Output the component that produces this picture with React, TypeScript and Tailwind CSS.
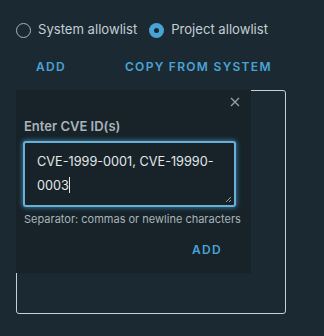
import React from "react";

export default function App() {
  return (
    <div
      className="w-[324px] h-[336px] bg-[#1b2a32] overflow-hidden"
      style={{ fontFamily: "Inter, 'Noto Sans', sans-serif" }}
    >
      <div className="flex items-center pl-[16px] pt-[22px] h-[16px] box-content">
        <label className="flex items-center gap-[7px]">
          <span className="w-[15px] h-[15px] rounded-full border border-[#aab4b9]" />
          <span className="text-[13.1px] text-[#c4cdd2] whitespace-nowrap">System allowlist</span>
        </label>
        <label className="flex items-center gap-[7px] ml-[12px]">
          <span className="w-[15px] h-[15px] rounded-full bg-[#4aa3d6] flex items-center justify-center">
            <span className="w-[5px] h-[5px] rounded-full bg-[#1b2a32]" />
          </span>
          <span className="text-[13.1px] text-[#c4cdd2] whitespace-nowrap">Project allowlist</span>
        </label>
      </div>
      <div className="flex items-center pl-[36px] mt-[20px] h-[18px] gap-[59px]">
        <button className="text-[12px] font-semibold tracking-[1.3px] text-[#4aa3d6]">ADD</button>
        <button className="text-[12px] font-semibold tracking-[1.3px] text-[#4aa3d6]">COPY FROM SYSTEM</button>
      </div>
      <div className="relative ml-[16px] mt-[14px] w-[270px] h-[224px] border border-[#c9cfd2] rounded-[3px]">
        <div className="absolute left-[-1px] top-[-1px] w-[235px] h-[183px] bg-[#172329] px-[7px]">
          <div className="flex justify-end pr-[4px] pt-[6px] h-[20px]">
            <svg width="10" height="10" viewBox="0 0 10 10" className="mt-[1px]">
              <path d="M1 1 L9 9 M9 1 L1 9" stroke="#9aa5ab" strokeWidth="1.2" />
            </svg>
          </div>
          <div className="mt-[7px] text-[13px] leading-[18px] font-semibold text-[#a9b4ba] pl-[1px]">Enter CVE ID(s)</div>
          <div className="mt-[6px] w-[213px] h-[66px] rounded-[3px] border-[2px] border-[#6aafd6] shadow-[0_0_4px_1px_rgba(74,163,214,0.6)] bg-[#172329] relative pl-[12px] pt-[7px]">
            <div className="text-[12.7px] leading-[24px] text-[#e3e8ea] whitespace-nowrap">
              CVE-1999-0001, CVE-19990-
              <br />
              0003<span className="inline-block w-[1px] h-[16px] bg-[#e3e8ea] align-[-3px]" />
            </div>
            <svg className="absolute right-[2px] bottom-[2px]" width="7" height="7" viewBox="0 0 7 7">
              <path d="M1 6 L6 1 M4 6 L6 4" stroke="#9aa5ab" strokeWidth="1" />
            </svg>
          </div>
          <div className="mt-[4px] text-[11px] leading-[16px] text-[#a9b4ba] pl-[1px] whitespace-nowrap">Separator: commas or newline characters</div>
          <div className="flex justify-end pr-[22px] mt-[14px]">
            <button className="text-[12px] font-semibold tracking-[1.3px] text-[#4aa3d6]">ADD</button>
          </div>
        </div>
      </div>
    </div>
  );
}
